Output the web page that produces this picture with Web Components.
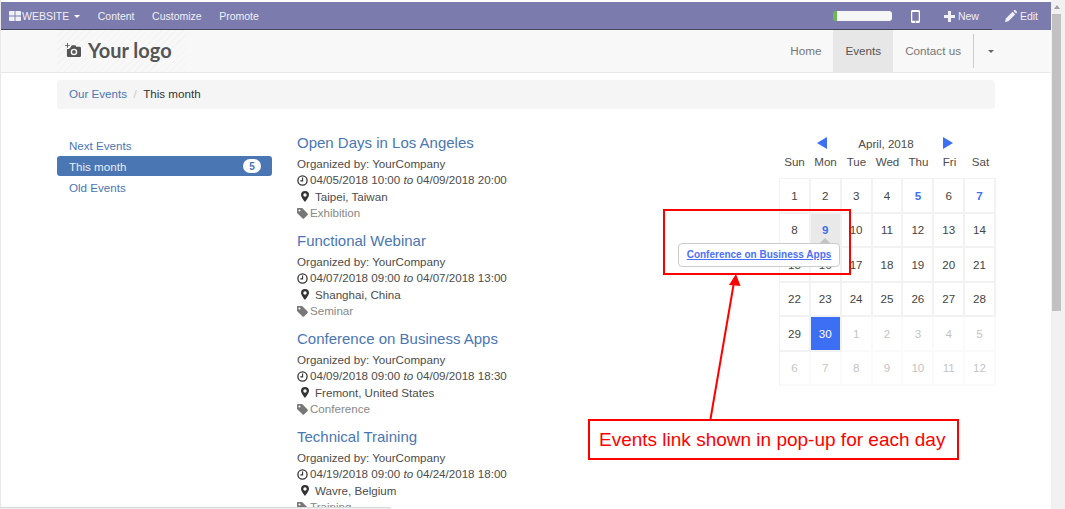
<!DOCTYPE html>
<html>
<head>
<meta charset="utf-8">
<title>Events</title>
<style>
html, body { margin: 0; padding: 0; height: 100%; overflow: hidden; }
body { font-family: "Liberation Sans", Arial, sans-serif; font-size: 12px; color: #4c4c4c; background: #fff; }
</style>
</head>
<body>
<events-app></events-app>
<script>
const ICONS = {
  grid: '<svg width="12" height="10" viewBox="0 0 13 12" preserveAspectRatio="none"><path fill="currentColor" d="M0 1.2C0 .5.5 0 1.2 0H6v5.5H0zM7 0h4.8c.7 0 1.2.5 1.2 1.2v4.3H7zM0 6.500h6V12H1.200C.5 12 0 11.500 0 10.800zM7 6.500h6v4.300c0 .7-.5 1.200-1.200 1.200H7z"/></svg>',
  mobile: '<svg width="9" height="13" viewBox="0 0 9 13"><path fill="currentColor" fill-rule="evenodd" d="M1.500 0h6C8.300 0 9 .7 9 1.500v10C9 12.300 8.300 13 7.500 13h-6C.7 13 0 12.300 0 11.500v-10C0 .7.7 0 1.500 0zM1.300 2v8.700h6.400V2zM4.500 11.200a.7.7 0 1 0 0 1.400.7.7 0 0 0 0-1.400z"/></svg>',
  plus: '<svg width="11" height="11" viewBox="0 0 11 11"><path fill="currentColor" d="M4 0h3v4h4v3H7v4H4V7H0V4h4z"/></svg>',
  pencil: '<svg width="12" height="12" viewBox="0 0 12 12"><path fill="currentColor" d="M0 12l.8-3.400L7.600 1.800l2.600 2.600-6.800 6.800zM8.400 1l.7-.7c.4-.4 1-.4 1.400 0l1.200 1.200c.4.4.4 1 0 1.400l-.7.700z"/></svg>',
  clock: '<svg width="11" height="11" viewBox="0 0 11 11"><circle cx="5.500" cy="5.500" r="4.600" fill="none" stroke="currentColor" stroke-width="1.300"/><path fill="none" stroke="currentColor" stroke-width="1.100" d="M5.600 2.600v3.300H3.300"/></svg>',
  pin: '<svg width="8" height="11" viewBox="0 0 8 11"><path fill="currentColor" fill-rule="evenodd" d="M4 0a4 4 0 0 1 4 4c0 1.700-2.600 5.500-4 7C2.600 9.500 0 5.700 0 4a4 4 0 0 1 4-4zm0 2.300a1.700 1.700 0 1 0 0 3.400 1.700 1.700 0 0 0 0-3.400z"/></svg>',
  tag: '<svg width="11" height="11" viewBox="0 0 11 11"><path fill="currentColor" fill-rule="evenodd" d="M0 1c0-.6.4-1 1-1h3.600c.3 0 .6.100.8.300l5.200 5.200c.4.400.4 1 0 1.400L7 10.500c-.4.400-1 .4-1.400 0L.3 5.300C.1 5.100 0 4.800 0 4.500zm2.500.6a1 1 0 1 0 0 2 1 1 0 0 0 0-2z"/></svg>',
  camera: '<svg width="17" height="15" viewBox="0 0 18 16"><path fill="currentColor" fill-rule="evenodd" d="M2 0h1v2h2v1H3v2H2V3H0V2h2zM7 2.500h4l1 1.500h3.500c.8 0 1.500.7 1.500 1.500v8c0 .8-.7 1.500-1.500 1.500h-12C2.700 15 2 14.300 2 13.500V6.500h2l2-2zM9.500 6a3.500 3.500 0 1 0 0 7 3.500 3.500 0 0 0 0-7zm0 1.500a2 2 0 1 1 0 4 2 2 0 0 1 0-4z"/></svg>'
};

function makeShadow(el, html) {
  const root = el.attachShadow({ mode: 'open' });
  root.innerHTML = html;
  return root;
}

customElements.define('top-bar', class extends HTMLElement {
  constructor() {
    super();
    makeShadow(this, `
<style>
:host { display: flex; align-items: center; height: 28px; margin-top: 2px; background: #7c7bad; color: #fff; font-size: 10.500px; position: relative; }
:host::after { content: ""; position: absolute; left: 0; bottom: 0; width: 992px; height: 1px; background: #45445f; }
.item { display: flex; align-items: center; gap: 3px; color: #f0f0f6; }
.left { display: flex; align-items: center; gap: 17.500px; padding-left: 9px; }
.left .item:first-child { gap: 1px; }
.right { margin-left: auto; display: flex; align-items: center; }
.caret { width: 0; height: 0; border: 3.500px solid transparent; border-top-color: #fff; border-bottom: 0; margin-left: 4px; }
.bar { width: 59px; height: 10px; background: #f6f6f6; border-radius: 3px; border-left: 4px solid #6cb94e; box-sizing: border-box; margin-right: 19px; }
.phone { margin-right: 24px; display: flex; }
.new { margin-right: 26px; }
.edit { margin-right: 13px; }
</style>
<div class="left">
  <div class="item">${ICONS.grid}<span>WEBSITE</span><i class="caret"></i></div>
  <div class="item">Content</div>
  <div class="item">Customize</div>
  <div class="item">Promote</div>
</div>
<div class="right">
  <div class="bar"></div>
  <div class="phone">${ICONS.mobile}</div>
  <div class="item new">${ICONS.plus}<span>New</span></div>
  <div class="item edit">${ICONS.pencil}<span>Edit</span></div>
</div>`);
  }
});

customElements.define('site-header', class extends HTMLElement {
  constructor() {
    super();
    makeShadow(this, `
<style>
:host { display: block; height: 42px; background: #f8f8f8; border-bottom: 1px solid #e7e7e7; box-sizing: content-box; }
.wrap { width: 938px; height: 42px; margin-left: 57px; display: flex; justify-content: space-between; }
.logo { display: flex; align-items: center; gap: 6px; padding: 0 0 2px 8px; width: 122px; white-space: nowrap; color: #555; font: 700 20px Lato, sans-serif;
  background: repeating-linear-gradient(135deg, transparent 0 4px, #f3f3f3 4px 5px); }
nav { display: flex; align-items: stretch; font-size: 11.700px; color: #777; margin-right: -13px; }
nav a { display: flex; align-items: center; padding: 0 12px 2px; }
nav a.active { background: #e7e7e7; color: #555; }
.sep { width: 1px; background: #ccc; margin: 4px 0 4px 0; }
.more { width: 34px; display: flex; align-items: center; justify-content: center; }
.caret { width: 0; height: 0; border: 3px solid transparent; border-top-color: #666; border-bottom: 0; }
</style>
<div class="wrap">
  <div class="logo">${ICONS.camera}<span>Your logo</span></div>
  <nav>
    <a>Home</a><a class="active">Events</a><a>Contact us</a>
    <i class="sep"></i>
    <div class="more"><i class="caret"></i></div>
  </nav>
</div>`);
  }
});

customElements.define('bread-crumb', class extends HTMLElement {
  constructor() {
    super();
    makeShadow(this, `
<style>
:host { display: flex; align-items: center; width: 938px; height: 29px; margin: 7px 0 0 57px; padding: 0 0 3px 12px; box-sizing: border-box; background: #f5f5f5; border-radius: 4px; font-size: 11.600px; color: #333; }
a { color: #4a76b4; }
.sep { color: #ccc; margin: 0 6.500px; }
</style>
<a>Our Events</a><span class="sep">/</span><span>This month</span>`);
  }
});

customElements.define('side-nav', class extends HTMLElement {
  constructor() {
    super();
    makeShadow(this, `
<style>
:host { display: block; width: 215px; font-size: 11.600px; color: #4a76b4; padding-top: 26px; }
.row { display: flex; align-items: center; justify-content: space-between; height: 20px; margin-bottom: 1px; padding: 0 11px 0 12px; border-radius: 3px; }
.on { background: #4a76b4; color: #e9eef6; }
.badge { background: #fff; color: #4a76b4; font-weight: 700; font-size: 10px; border-radius: 9px; width: 18px; height: 14px; display: flex; align-items: center; justify-content: center; }
</style>
<div class="row">Next Events</div>
<div class="row on">This month<span class="badge">5</span></div>
<div class="row">Old Events</div>`);
  }
});

customElements.define('event-item', class extends HTMLElement {
  constructor() {
    super();
    const d = this.dataset;
    makeShadow(this, `
<style>
:host { display: block; height: 98px; font-size: 11.600px; color: #4c4c4c; line-height: 16.300px; }
h4 { margin: 0 0 2px; font-size: 15px; font-weight: 400; line-height: 22px; color: #4a76b4; }
.line { display: flex; align-items: center; }
.when svg { margin-right: 2px; color: #333; }
.where svg { margin: 0 6px 0 4px; color: #333; }
.tag { color: #888; }
.tag svg { margin-right: 2px; color: #777; }
i { margin: 0 3.300px; }
</style>
<h4>${d.title}</h4>
<div class="line">Organized by: YourCompany</div>
<div class="line when">${ICONS.clock}${d.from}<i>to</i>${d.to}</div>
<div class="line where">${ICONS.pin}${d.place}</div>
<div class="line tag">${ICONS.tag}${d.kind}</div>`);
  }
});

customElements.define('month-calendar', class extends HTMLElement {
  constructor() {
    super();
    const heads = ['Sun', 'Mon', 'Tue', 'Wed', 'Thu', 'Fri', 'Sat'];
    const days = [];
    for (let i = 1; i <= 30; i++) days.push([i, '']);
    for (let i = 1; i <= 12; i++) days.push([i, 'off']);
    days[4][1] = 'has';
    days[6][1] = 'has';
    days[8][1] = 'has pick';
    days[29][1] = 'now';
    makeShadow(this, `
<style>
:host { display: block; width: 217px; font-size: 11.600px; color: #4c4c4c; padding-top: 26px; }
.title { display: flex; align-items: center; justify-content: space-between; height: 16px; padding: 0 43px 0 38px; }
.title span { margin-left: 2px; }
.arr { width: 0; height: 0; border: 6px solid transparent; border-left: 0; border-right: 10px solid #3d6ff5; }
.arr.next { border-right: 0; border-left: 10px solid #3d6ff5; }
.heads, .days { display: grid; grid-template-columns: repeat(7, 1fr); }
.heads { height: 21px; align-items: center; text-align: center; margin-bottom: 6px; }
.days { grid-auto-rows: 34.500px; border: 1px solid #f2f2f2; border-width: 1px 0 0 1px; }
.days div { display: flex; align-items: center; justify-content: center; border: solid #f2f2f2; border-width: 0 2px 2px 0; color: #444; }
.days .off { color: #c4c4c4; border-color: #fafafa; }
.days .has { color: #3d6ff5; font-weight: 700; }
.days .pick { background: #e9e9e9; }
.days .now { background: #3d6ff5; color: #fff; }
</style>
<div class="title"><i class="arr"></i><span>April, 2018</span><i class="arr next"></i></div>
<div class="heads">${heads.map(h => `<span>${h}</span>`).join('')}</div>
<div class="days">${days.map(d => `<div class="${d[1]}">${d[0]}</div>`).join('')}</div>`);
  }
});

customElements.define('fake-scrollbar', class extends HTMLElement {
  constructor() {
    super();
    makeShadow(this, `
<style>
:host { display: block; width: 14px; height: 509px; background: #f1f1f1; box-sizing: border-box; padding: 14px 4px 0 1px; position: relative; }
.up { position: absolute; top: 5px; left: 3px; width: 0; height: 0; border: 3px solid transparent; border-bottom: 4px solid #a0a0a0; border-top: 0; }
.thumb { height: 297px; background: #c1c1c1; }
</style>
<i class="up"></i><div class="thumb"></div>`);
  }
});

// red annotations and the day pop-up lie over the page
customElements.define('note-layer', class extends HTMLElement {
  constructor() {
    super();
    makeShadow(this, `
<style>
:host { display: block; position: absolute; inset: 0; pointer-events: none; }
.pop { position: absolute; left: 678px; top: 243px; width: 162px; height: 24px; padding-bottom: 2px; box-sizing: border-box; background: #fff; border: 1px solid #ccc; border-radius: 4px; display: flex; align-items: center; justify-content: center; font: 700 10px "Liberation Sans", sans-serif; color: #4c6ffc; text-decoration: underline; }
.pop::before { content: ""; position: absolute; top: -6px; left: 140px; width: 0; height: 0; border: 6px solid transparent; border-top: 0; border-bottom-color: #c4c4c4; }
.box { position: absolute; left: 663px; top: 209px; width: 188px; height: 66px; box-sizing: border-box; border: 2px solid #f00; }
.say { position: absolute; left: 588px; top: 419px; width: 371px; height: 41px; box-sizing: border-box; border: 2px solid #f00; background: #fff; color: #f00; font: 19px "Liberation Sans", sans-serif; display: flex; align-items: center; padding-left: 9px; }
svg { position: absolute; left: 0; top: 0; }
</style>
<div class="pop">Conference on Business Apps</div>
<div class="box"></div>
<svg width="1065" height="509"><path d="M710.500 419 L733.500 285" stroke="#f00" stroke-width="2" fill="none"/><path d="M736 274 L740.500 286 L729 285z" fill="#f00"/></svg>
<div class="say">Events link shown in pop-up for each day</div>`);
  }
});

customElements.define('events-app', class extends HTMLElement {
  constructor() {
    super();
    const events = [
      ['Open Days in Los Angeles', '04/05/2018 10:00', '04/09/2018 20:00', 'Taipei, Taiwan', 'Exhibition'],
      ['Functional Webinar', '04/07/2018 09:00', '04/07/2018 13:00', 'Shanghai, China', 'Seminar'],
      ['Conference on Business Apps', '04/09/2018 09:00', '04/09/2018 18:30', 'Fremont, United States', 'Conference'],
      ['Technical Training', '04/19/2018 09:00', '04/24/2018 18:00', 'Wavre, Belgium', 'Training']
    ];
    makeShadow(this, `
<style>
:host { display: flex; width: 1065px; height: 509px; overflow: hidden; position: relative; }
.page { width: 1051px; height: 509px; overflow: hidden; flex: none; }
.body { display: flex; padding-left: 57px; }
.list { width: 482px; margin-left: 25px; padding-top: 23px; }
.status { position: absolute; left: 0; bottom: 0; width: 390px; height: 1px; background: #f0f0f0; border: 1px solid #d8d8d8; border-width: 1px 1px 0 0; border-radius: 0 3px 0 0; }
.edge { position: absolute; left: 0; top: 0; width: 1px; height: 100%; background: #e8e8e8; }
</style>
<div class="page">
  <top-bar></top-bar>
  <site-header></site-header>
  <bread-crumb></bread-crumb>
  <div class="body">
    <side-nav></side-nav>
    <div class="list">${events.map(e => `<event-item data-title="${e[0]}" data-from="${e[1]}" data-to="${e[2]}" data-place="${e[3]}" data-kind="${e[4]}"></event-item>`).join('')}</div>
    <month-calendar></month-calendar>
  </div>
</div>
<fake-scrollbar></fake-scrollbar>
<div class="edge"></div>
<div class="status"></div>
<note-layer></note-layer>`);
  }
});
</script>
</body>
</html>
